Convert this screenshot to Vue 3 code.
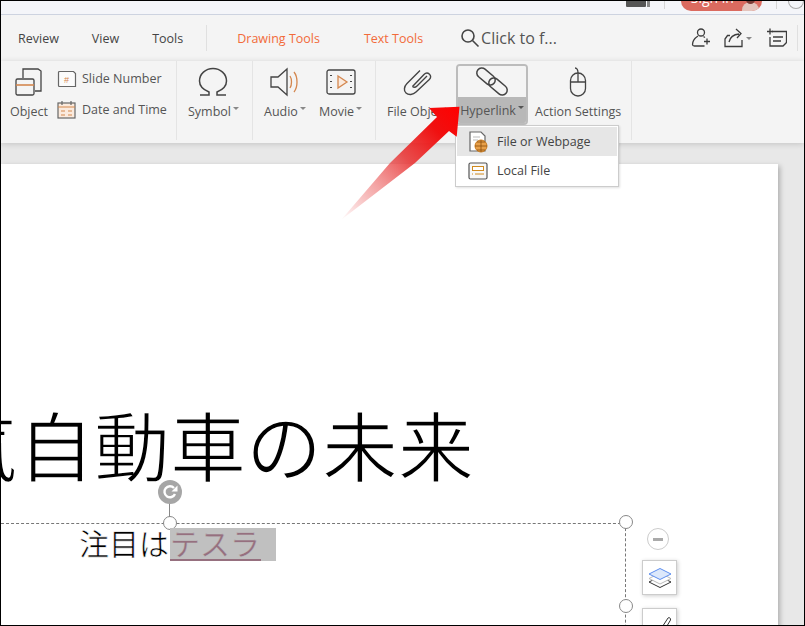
<script setup>
</script>

<template>
  <div class="window">
    <div class="titlebar">
      <div class="tb-box"></div>
      <div class="tb-bar"></div>
      <div class="tb-sep"></div>
      <div class="signin"><span class="signin-t">Sign in</span><span class="avatar"></span><span class="avatar-head"></span></div>
      <div class="tb-sep"></div>
      <div class="tb-shield"></div>
    </div>
    <div class="tabs">
      <span class="tab t-review">Review</span>
      <span class="tab t-view">View</span>
      <span class="tab t-tools">Tools</span>
      <span class="tabsep"></span>
      <span class="tab orange t-draw">Drawing Tools</span>
      <span class="tab orange t-text">Text Tools</span>
      <svg class="search" width="20" height="20" viewBox="0 0 20 20" fill="none" stroke="#444" stroke-width="1.6"><circle cx="8" cy="8" r="6"/><path d="M12.500 12.500l6 6"/></svg>
      <span class="clickto">Click to f...</span>
      <span class="spacer"></span>
      <svg class="ticon" width="20" height="20" viewBox="0 0 20 20" fill="none" stroke="#3c3c3c" stroke-width="1.300"><circle cx="10" cy="4.500" r="3.500"/><path d="M7 8c-3 2-5.500 5-5.500 8.500c0 1 .8 1.500 2 1.500h10"/><path d="M12.500 8.500c.5.300 1 .8 1.300 1.200M13 13.500h6M16 10.500v6"/></svg>
      <svg class="ticon share" width="20" height="20" viewBox="0 0 20 20" fill="none" stroke="#3c3c3c" stroke-width="1.300"><path d="M6 7.500H3.500L1 11v7.500h17V12"/><path d="M5 14c1-4.500 4-7.500 10-8M12 1l5 4.500l-4 4.500"/></svg>
      <span class="caret share-c"></span>
      <svg class="ticon note" width="20" height="20" viewBox="0 0 20 20" fill="none" stroke="#3c3c3c" stroke-width="1.300"><path d="M5 3.500h14.500v11l-3.500 3.500H3V9"/><path d="M0 3.500h6M3 .5v6M6 9h10M6 13h8"/></svg>
      <span class="tabsep2"></span>
    </div>

    <div class="ribbon">
      <div class="group g1">
        <div class="big obj">
          <svg width="30" height="30" viewBox="0 0 30 30" fill="none" stroke="#444" stroke-width="1.300"><path d="M8 11V2h15l3 2v20h-6"/><rect x="1" y="12" width="18" height="16" rx="1.500" fill="#f4f4f4"/><path d="M1 18h18" stroke="#d4874f" stroke-width="1.600"/></svg>
          <span class="lbl">Object</span>
        </div>
        <div class="stack">
          <div class="row">
            <svg width="20" height="18" viewBox="0 0 20 18" fill="none" stroke="#666" stroke-width="1.200"><path d="M2.500 1.500h14l2 2v13h-16a1 1 0 0 1-1-1v-13a1 1 0 0 1 1-1z" fill="#fbfbfb"/><text x="7" y="13" font-size="9" fill="#d4874f" stroke="none" font-family="Liberation Sans">#</text></svg>
            <span class="lbl">Slide Number</span>
          </div>
          <div class="row">
            <svg width="20" height="20" viewBox="0 0 20 20" fill="none" stroke="#666" stroke-width="1.200"><rect x="1" y="3" width="17" height="15" fill="#fbeadd"/><path d="M5 1v4M14 1v4" /><path d="M1 7h17M4 11h4M11 11h4M4 15h4M11 15h4" stroke="#d4874f"/></svg>
            <span class="lbl">Date and Time</span>
          </div>
        </div>
      </div>
      <div class="group g2">
        <div class="big">
          <svg width="30" height="30" viewBox="0 0 30 30" fill="none" stroke="#444" stroke-width="1.500"><path d="M2 28h9v-3C6 23 1.500 19 1.500 14C1.500 7 7.500 1.500 15 1.500S28.500 7 28.500 14c0 5-4.500 9-9.500 11v3h9"/></svg>
          <span class="lbl">Symbol<i class="caret"></i></span>
        </div>
      </div>
      <div class="group g3">
        <div class="big">
          <svg width="32" height="30" viewBox="0 0 32 30" fill="none" stroke="#444" stroke-width="1.300"><path d="M2 10v10h7l9 8V2L9 10z"/><path d="M21 9c2 3 2 9 0 12M25 5c4 5 4 15 0 20" stroke="#d4874f"/></svg>
          <span class="lbl">Audio<i class="caret"></i></span>
        </div>
        <div class="big">
          <svg width="30" height="26" viewBox="0 0 30 26" fill="none" stroke="#444" stroke-width="1.300"><rect x="1" y="1" width="28" height="24" rx="2"/><path d="M12 7l9 6l-9 6z" stroke="#d4874f" fill="#fbeadd"/><path d="M5 6v1M5 12v1M5 18v1M25 6v1M25 12v1M25 18v1" stroke-width="2"/></svg>
          <span class="lbl">Movie<i class="caret"></i></span>
        </div>
      </div>
      <div class="group g4">
        <div class="big fileobj">
          <svg width="30" height="26" viewBox="0 0 30 26" fill="none" stroke="#444" stroke-width="1.400"><path d="M9.500 17.500L21 5.500c1.800-1.800 4-1.600 5.500-.2s1.600 3.500-.2 5.300L13 23c-3 3-7.500 3.200-10 1s-2-6.500 1-9.500L17 1.500"/><path d="M9.500 17.500c1.500 1.300 3 1 4.500-.5L24 7"/></svg>
          <span class="lbl">File Object</span>
        </div>
        <div class="hyper">
          <div class="hy-top">
            <svg class="link" width="30" height="27" viewBox="0 0 30 27" fill="none" stroke="#444" stroke-width="1.500">
              <rect x="-1.500" y="3.500" width="21" height="10" rx="5" transform="rotate(40 9 8.500)"/>
              <rect x="10.500" y="13.500" width="21" height="10" rx="5" transform="rotate(40 21 18.500)"/>
            </svg>
          </div>
          <div class="hy-bot"><span class="lbl">Hyperlink<i class="caret dark"></i></span></div>
        </div>
        <div class="big action">
          <svg width="18" height="30" viewBox="0 0 18 30" fill="none" stroke="#444" stroke-width="1.300"><rect x="1.500" y="6" width="15" height="23" rx="7.500"/><path d="M1.500 15h15M9 6v9M9 6c0-3-1-5-3-5"/></svg>
          <span class="lbl">Action Settings</span>
        </div>
      </div>
    </div>

    <div class="workspace">
      <div class="slide">
        <div class="title">気自動車の未来</div>
        <div class="selbox"></div>
        <div class="selright"></div>
        <div class="handle h-top"></div>
        <div class="handle h-tr"></div>
        <div class="handle h-r"></div>
        <div class="stem"></div>
        <div class="rotate">
          <svg width="24" height="24" viewBox="0 0 24 24"><circle cx="12" cy="12" r="12" fill="#a6a6a6"/><path d="M17 14a5.500 5.500 0 1 1-1-6" fill="none" stroke="#fff" stroke-width="2.400"/><path d="M13.500 11.500h6v-6z" fill="#fff"/></svg>
        </div>
        <div class="sub"><span class="sub-a">注目は</span><span class="sub-b"><span class="sub-link">テスラ</span></span></div>
        <div class="minus"><span></span></div>
        <div class="float layers">
          <svg width="24" height="24" viewBox="0 0 24 24" fill="none"><path d="M1 16l11 5.500L23 16l-11-5.500z" stroke="#333" stroke-width="1"/><path d="M1 12.500L12 18l11-5.500L12 7z" stroke="#bbb" fill="#fff"/><path d="M1 8l11 5.500L23 8L12 2.500z" stroke="#5b8def" fill="#dce8fb"/></svg>
        </div>
        <div class="float pen">
          <svg width="24" height="24" viewBox="0 0 24 24" fill="none"><path d="M9 21L20 4c1-1 3 0 2.500 2L13 22" stroke="#333"/><path d="M3 24l6-3" stroke="#2a6fd6" stroke-width="2"/></svg>
        </div>
      </div>
    </div>

    <div class="menu">
      <div class="mi on">
        <svg width="20" height="22" viewBox="0 0 20 22" fill="none"><path d="M2 1h11l4 4v15H2z" stroke="#666" stroke-width="1.200" fill="#fff"/><path d="M5 6h7M5 9h5" stroke="#bbb"/><circle cx="13" cy="15" r="6" fill="#e8a04a" stroke="#c77a1f"/><path d="M7 15h12M13 9v12M9 11h8M9 19h8" stroke="#8a4e0c" stroke-width=".8"/></svg>
        <span>File or Webpage</span>
      </div>
      <div class="mi">
        <svg width="20" height="18" viewBox="0 0 20 18" fill="none"><rect x="1" y="1" width="18" height="16" rx="1.500" stroke="#555" stroke-width="1.200" fill="#f7f7f7"/><rect x="4.500" y="4.500" width="11" height="4" stroke="#d08a1e" fill="#fff"/><path d="M4 12h1M7 12h9" stroke="#d08a1e"/></svg>
        <span>Local File</span>
      </div>
    </div>

    <svg class="arrow" width="125" height="130" viewBox="0 0 125 130">
      <defs>
        <linearGradient id="ag" gradientUnits="userSpaceOnUse" x1="1" y1="125" x2="119" y2="12">
          <stop offset="0" stop-color="#e83030" stop-opacity="0"/>
          <stop offset=".3" stop-color="#e84a4a" stop-opacity=".5"/>
          <stop offset=".55" stop-color="#e83030" stop-opacity=".85"/>
          <stop offset=".8" stop-color="#f01010"/>
          <stop offset="1" stop-color="#ff0000"/>
        </linearGradient>
      </defs>
      <path d="M1 125L50 68L97 22L89 13L119.500 11.700L116.700 41.700L109 36L75 68Z" fill="url(#ag)"/>
    </svg>
  </div>
</template>

<style scoped>
.window {
  position: relative;
  width: 805px;
  height: 626px;
  box-sizing: border-box;
  border: 1px solid #000;
  overflow: hidden;
  background: #e8e8e8;
  font-family: "Open Sans", "Noto Sans", sans-serif;
  display: flex;
  flex-direction: column;
}
.titlebar {
  height: 13px;
  flex: none;
  background: #f4f5f9;
  border-bottom: 1px solid #cdd3e0;
  display: flex;
  align-items: flex-start;
  padding-left: 625px;
  overflow: hidden;
}
.tb-box { width: 21px; height: 6px; background: #555; border-radius: 0 0 1px 1px; }
.tb-bar { width: 3px; height: 6px; background: #888; margin-left: 1px; }
.tb-sep { width: 1px; height: 8px; background: #d5d5d5; margin: 0 15px 0 14px; }
.signin {
  width: 81px; height: 10px; border-radius: 0 0 14px 14px; flex: none;
  background: #db6a5f; color: #fff; font-size: 14px; position: relative; overflow: hidden; margin-left: 1px;
}
.signin-t { position: absolute; left: 10px; top: -13px; white-space: nowrap; }
.avatar { position: absolute; right: 3px; top: 1px; width: 17px; height: 16px; border-radius: 50%; background: #e4c4bc; }
.avatar-head { position: absolute; right: 7px; top: -6px; width: 9px; height: 9px; border-radius: 50%; background: #7a3a34; }
.tb-shield { width: 15px; height: 7px; border: 1px solid #aaa; border-top: 0; border-radius: 0 0 8px 8px; margin-left: -4px; }

.tabs {
  height: 46px;
  flex: none;
  background: #f4f4f4;
  display: flex;
  align-items: center;
  font-size: 12.500px;
  color: #444;
  position: relative;
}
.tab { white-space: nowrap; }
.t-review { margin-left: 17px; }
.t-view { margin-left: 33px; }
.t-tools { margin-left: 33px; }
.tabsep { width: 1px; height: 26px; background: #e0e0e0; margin-left: 23px; }
.orange { color: #f26b3a; }
.t-draw { margin-left: 30px; }
.t-text { margin-left: 44px; }
.search { margin-left: 37px; }
.clickto { font-size: 16px; color: #555; margin-left: 1px; }
.spacer { flex: 1; }
.ticon { flex: none; }
.share { margin-left: 13px; }
.share-c { margin-left: 2px; margin-right: 15px; }
.caret, .lbl i {
  display: inline-block;
  width: 0; height: 0;
  border-left: 3px solid transparent;
  border-right: 3px solid transparent;
  border-top: 3px solid #888;
  vertical-align: 6px;
  margin-left: 2px;
}
.caret.dark { border-top-color: #555; }
.note { margin-right: 10px; }
.tabsep2 { width: 1px; height: 26px; background: #e0e0e0; margin-right: 6px; }

.ribbon {
  height: 82px;
  flex: none;
  background: #f4f4f4;
  display: flex;
  box-shadow: 0 1px 6px rgba(0, 0, 0, .16);
  padding-bottom: 3px;
  box-sizing: border-box;
  position: relative;
}
.group {
  display: flex;
  border-right: 1px solid #e4e4e4;
  flex: none;
  height: 79px;
  box-sizing: border-box;
}
.g1 { width: 176px; padding-left: 9px; }
.g2 { width: 76px; justify-content: center; padding-right: 2px; }
.g3 { width: 123px; padding-left: 11px; gap: 13px; }
.g4 { width: 256px; }
.big {
  display: flex;
  flex-direction: column;
  align-items: center;
  flex: none;
  padding-top: 5px;
}
.big svg { height: 32px; margin-bottom: 5px; }
.obj svg { margin-left: 2px; }
.lbl {
  font-size: 12.500px;
  color: #555;
  white-space: nowrap;
  line-height: 17px;
}
.stack { display: flex; flex-direction: column; margin-left: 9px; padding-top: 7px; gap: 10px; }
.row { display: flex; align-items: center; gap: 5px; height: 21px; }
.row svg { flex: none; }
.fileobj { margin-left: 11px; }
.hyper {
  width: 72px;
  height: 61px;
  margin-left: 8px;
  margin-top: 3px;
  flex: none;
  border: 2px solid #bcbcbc;
  border-radius: 4px;
  box-sizing: border-box;
  display: flex;
  flex-direction: column;
  overflow: hidden;
}
.hy-top { height: 31px; flex: none; display: flex; justify-content: center; align-items: flex-start; padding-top: 2px; box-sizing: border-box; background: #f4f4f4; }
.link { flex: none; overflow: visible; }
.hy-bot { flex: 1; background: #b8b8b8; display: flex; justify-content: center; align-items: center; }
.hy-bot .lbl { color: #555; }
.action { margin-left: 7px; }

.workspace {
  flex: 1;
  background: #e8e8e8;
  min-height: 0;
  padding-top: 21px;
}
.slide {
  position: relative;
  width: 777px;
  height: 470px;
  background: #fff;
  box-shadow: 2px 2px 5px rgba(0, 0, 0, .25);
}
.title {
  position: absolute;
  left: -59px;
  top: 229px;
  font-family: "Noto Sans CJK JP", sans-serif;
  font-size: 76px;
  line-height: 100px;
  color: #000;
  white-space: nowrap;
  -webkit-text-stroke: 1.600px #fff;
}
.selbox { position: absolute; left: 0; top: 359px; width: 625px; height: 0; border-top: 1px dashed #777; }
.selright { position: absolute; left: 624px; top: 359px; height: 120px; border-left: 1px dashed #777; }
.handle { position: absolute; width: 12px; height: 12px; border: 1px solid #888; border-radius: 50%; background: #fff; }
.h-top { left: 162px; top: 352px; }
.h-tr { left: 618px; top: 351px; }
.h-r { left: 618px; top: 435px; }
.stem { position: absolute; left: 168px; top: 335px; width: 1px; height: 18px; background: #888; }
.rotate { position: absolute; left: 157px; top: 316px; width: 24px; height: 24px; }
.sub {
  position: absolute;
  left: 78px;
  top: 364px;
  height: 33px;
  display: flex;
  font-family: "Noto Sans CJK JP", sans-serif;
  font-size: 30px;
  line-height: 29px;
  color: #000;
  white-space: nowrap;
  -webkit-text-stroke: .6px #fff;
}
.sub-a { width: 91px; }
.sub-b { width: 106px; background: #c0c0c0; color: #96707f; -webkit-text-stroke: .4px #c0c0c0; }
.sub-link { display: inline-block; width: 91px; border-bottom: 2px solid #96707f; height: 31px; }
.minus {
  position: absolute; left: 646px; top: 364px; width: 20px; height: 20px;
  border: 1px solid #ccc; border-radius: 50%; display: flex; align-items: center; justify-content: center;
}
.minus span { width: 10px; height: 3px; background: #aaa; }
.float {
  position: absolute; left: 641px; width: 33px; height: 33px; background: #fff;
  border: 1px solid #ccc; box-shadow: 1px 1px 4px rgba(0, 0, 0, .2);
  display: flex; align-items: center; justify-content: center;
}
.layers { top: 396px; }
.pen { top: 444px; }

.menu {
  position: absolute;
  left: 454px;
  top: 124px;
  width: 164px;
  box-sizing: border-box;
  background: #fff;
  border: 1px solid #ccc;
  box-shadow: 1px 1px 2px rgba(0, 0, 0, .12);
  padding: 1px;
}
.mi {
  height: 29px;
  display: flex;
  align-items: center;
  padding-left: 11px;
  gap: 9px;
  font-size: 12.500px;
  color: #444;
}
.mi svg { flex: none; }
.mi.on { background: #e6e6e6; }
.arrow { position: absolute; left: 339px; top: 94px; pointer-events: none; }
</style>
